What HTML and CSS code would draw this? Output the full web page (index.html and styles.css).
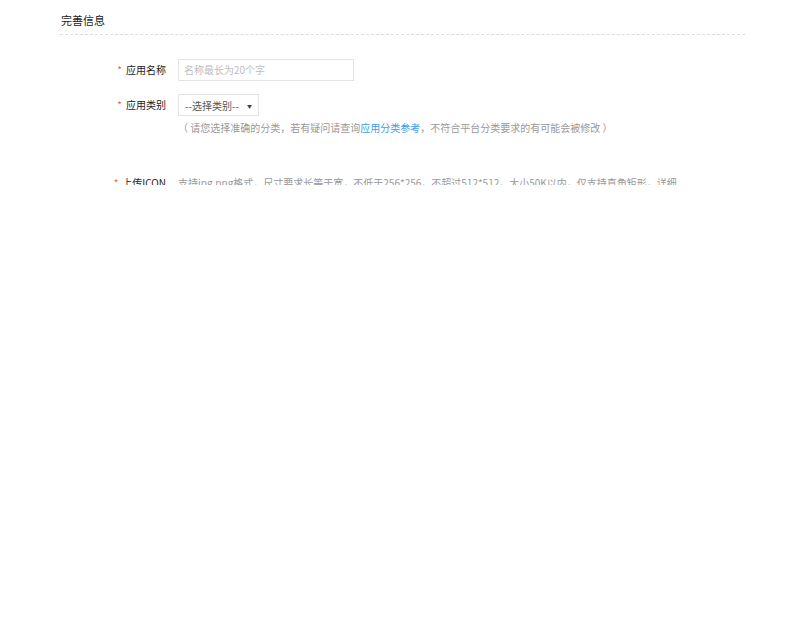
FILE: index.html
```html
<!DOCTYPE html>
<html lang="zh-CN">
<head>
<meta charset="utf-8">
<title>完善信息</title>
<link rel="stylesheet" href="styles.css">
</head>
<body>
<div class="page">
  <div class="section">
    <h2 class="title">完善信息</h2>
    <div class="form">
      <div class="row">
        <label class="label"><span class="star">*</span>应用名称</label>
        <div class="field">
          <div class="input"><span class="placeholder">名称最长为20个字</span></div>
        </div>
      </div>
      <div class="row">
        <label class="label"><span class="star">*</span>应用类别</label>
        <div class="field">
          <div class="select"><span>--选择类别--</span><span class="arrow">▼</span></div>
          <p class="hint">（ 请您选择准确的分类，若有疑问请查询<a class="link" href="#">应用分类参考</a>，不符合平台分类要求的有可能会被修改 ）</p>
        </div>
      </div>
      <div class="row row-icon">
        <label class="label"><span class="star">*</span>上传ICON</label>
        <div class="field">
          <p class="desc">支持jpg,png格式，尺寸要求长等于宽，不低于256*256，不超过512*512，大小50K以内，仅支持直角矩形，详细</p>
        </div>
      </div>
    </div>
  </div>
</div>
</body>
</html>
```

FILE: styles.css
```css
* { box-sizing: border-box; }
html, body { margin: 0; padding: 0; background: #fff; }
body {
  font-family: "Noto Sans CJK SC", "Liberation Sans", sans-serif;
  color: #333;
}
.page {
  height: 185px;
  overflow: hidden;
}
.section {
  margin-left: 60px;
  width: 685px;
}
.title {
  margin: 0;
  padding: 12px 0 0 1px;
  height: 35px;
  font-size: 11px;
  line-height: 16px;
  font-weight: normal;
  color: #222;
  border-bottom: 1px dashed #dcdcdc;
}
.form {
  padding-top: 24px;
}
.row {
  display: grid;
  grid-template-columns: 106px 1fr;
  column-gap: 12px;
  margin-bottom: 13px;
}
.label {
  text-align: right;
  font-size: 10px;
  line-height: 22px;
  color: #222;
  white-space: nowrap;
}
.star {
  color: #f0603c;
  margin-right: 4px;
}
.input {
  width: 176px;
  height: 22px;
  border: 1px solid #e3e3e3;
  padding: 0 5px;
  font-size: 10px;
  line-height: 20px;
}
.placeholder { color: #bdbdbd; }
.select {
  width: 81px;
  height: 22px;
  border: 1px solid #e3e3e3;
  padding: 0 6px;
  display: flex;
  justify-content: space-between;
  align-items: center;
  font-size: 10px;
  color: #555;
}
.arrow {
  font-size: 5px;
  color: #444;
}
.hint {
  margin: 5px 0 0;
  font-size: 10px;
  line-height: 14px;
  color: #999;
}
.link {
  color: #3e9bf0;
  text-decoration: none;
}
.row-icon {
  margin-top: 37px;
}
.desc {
  margin: 0;
  font-size: 10px;
  line-height: 22px;
  color: #999;
  white-space: nowrap;
}
```
